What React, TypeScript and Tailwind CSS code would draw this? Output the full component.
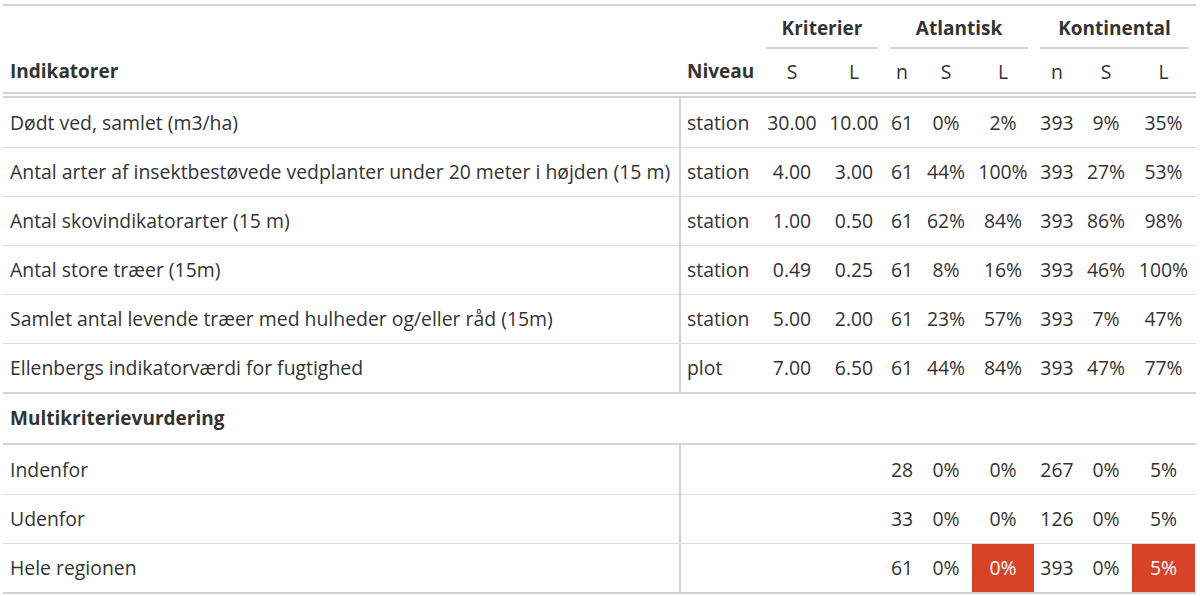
const cols = "grid grid-cols-[678px_79px_64px_60px_36px_52px_62px_46px_52px_63px]";

type Row = {
  name: string;
  niveau: string;
  vals: string[];
  red?: number[];
};

const indicators: Row[] = [
  { name: "Dødt ved, samlet (m3/ha)", niveau: "station", vals: ["30.00", "10.00", "61", "0%", "2%", "393", "9%", "35%"] },
  { name: "Antal arter af insektbestøvede vedplanter under 20 meter i højden (15 m)", niveau: "station", vals: ["4.00", "3.00", "61", "44%", "100%", "393", "27%", "53%"] },
  { name: "Antal skovindikatorarter (15 m)", niveau: "station", vals: ["1.00", "0.50", "61", "62%", "84%", "393", "86%", "98%"] },
  { name: "Antal store træer (15m)", niveau: "station", vals: ["0.49", "0.25", "61", "8%", "16%", "393", "46%", "100%"] },
  { name: "Samlet antal levende træer med hulheder og/eller råd (15m)", niveau: "station", vals: ["5.00", "2.00", "61", "23%", "57%", "393", "7%", "47%"] },
  { name: "Ellenbergs indikatorværdi for fugtighed", niveau: "plot", vals: ["7.00", "6.50", "61", "44%", "84%", "393", "47%", "77%"] },
];

const multi: Row[] = [
  { name: "Indenfor", niveau: "", vals: ["", "", "28", "0%", "0%", "267", "0%", "5%"] },
  { name: "Udenfor", niveau: "", vals: ["", "", "33", "0%", "0%", "126", "0%", "5%"] },
  { name: "Hele regionen", niveau: "", vals: ["", "", "61", "0%", "0%", "393", "0%", "5%"], red: [4, 7] },
];

function BodyRow({ row, first }: { row: Row; first: boolean }) {
  return (
    <div className={`${cols} ${first ? "h-[49px]" : "h-[49px] border-t border-[#dcdcdc]"}`}>
      <div className="flex items-center pl-[7px] border-r-2 border-[#d3d3d3] whitespace-nowrap">{row.name}</div>
      <div className="flex items-center pl-[6px]">{row.niveau}</div>
      {row.vals.map((v, i) => (
        <div
          key={i}
          className={`flex items-center justify-center ${row.red?.includes(i) ? "bg-[#d84328] text-white" : ""}`}
        >
          {v}
        </div>
      ))}
    </div>
  );
}

export default function App() {
  return (
    <div className="w-[1200px] h-[596px] bg-white pt-[4px] pl-[3px] text-[#333333] text-[19.4px] font-['Open_Sans',sans-serif] overflow-hidden">
      <div className="w-[1193px] border-t-2 border-[#d3d3d3]">
        {/* spanner row */}
        <div className={`${cols} h-[43px] font-bold text-[19px]`}>
          <div className="col-span-2" />
          {["Kriterier", "Atlantisk", "Kontinental"].map((s, i) => (
            <div key={s} className={`flex flex-col ${i === 0 ? "col-span-2" : "col-span-3"}`}>
              <div className="pt-[9px] leading-[27px] text-center">{s}</div>
              <div className="mt-auto mx-[6px] border-b-2 border-[#d3d3d3]" />
            </div>
          ))}
        </div>

        {/* column labels */}
        <div className={`${cols} h-[49px] border-b-[6px] border-double border-[#d3d3d3]`}>
          <div className="pl-[7px] pt-[9px] leading-[27px] font-bold text-[19px]">Indikatorer</div>
          <div className="pl-[6px] pt-[9px] leading-[27px] font-bold text-[19px]">Niveau</div>
          {["S", "L", "n", "S", "L", "n", "S", "L"].map((c, i) => (
            <div key={i} className="pt-[9px] leading-[27px] text-center">{c}</div>
          ))}
        </div>

        {indicators.map((r, i) => (
          <BodyRow key={r.name} row={r} first={i === 0} />
        ))}

        {/* row group */}
        <div className="h-[53px] border-y-2 border-[#d3d3d3] flex items-center pl-[7px] font-bold text-[19px]">
          Multikriterievurdering
        </div>

        {multi.map((r, i) => (
          <BodyRow key={r.name} row={r} first={i === 0} />
        ))}
        <div className="border-t-2 border-[#d3d3d3]" />
      </div>
    </div>
  );
}
